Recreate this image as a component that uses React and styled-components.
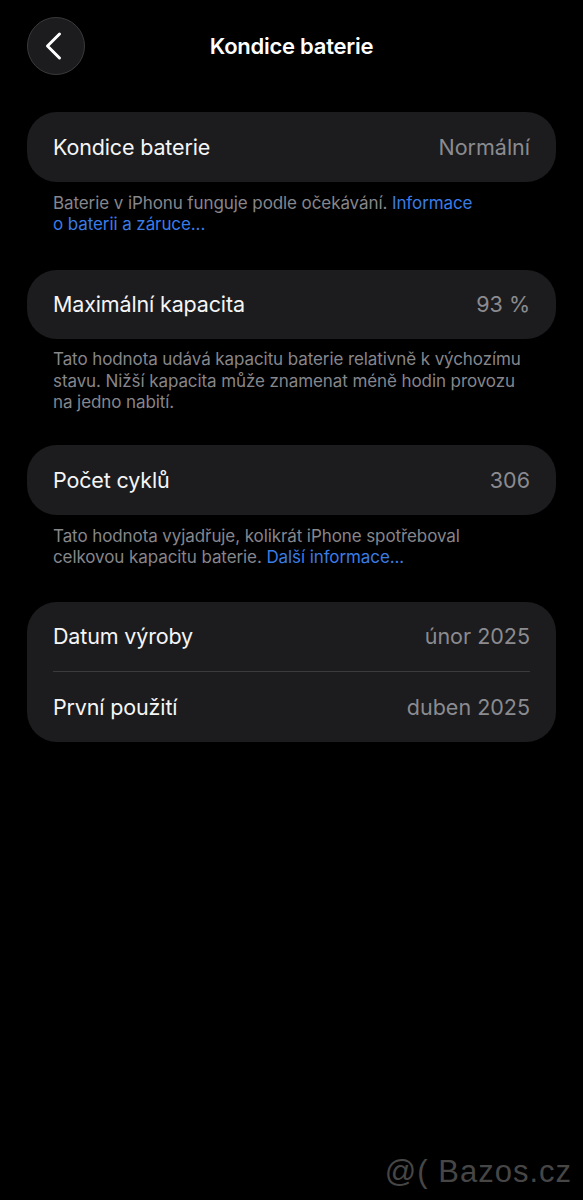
import React from "react";
import styled, { createGlobalStyle } from "styled-components";

const Global = createGlobalStyle`
  html, body { margin: 0; padding: 0; background: #000; }
  body { font-family: "Inter", "Liberation Sans", sans-serif; }
`;
const Page = styled.div`
  position: relative; width: 583px; height: 1200px; background: #000; overflow: hidden;
  padding: 17px 27px 0; box-sizing: border-box;
`;
const Header = styled.header`
  display: grid; grid-template-columns: 58px 1fr 58px; align-items: center; height: 58px; margin-bottom: 37px;
`;
const Back = styled.button`
  width: 58px; height: 58px; border-radius: 50%; background: #1c1c1e; border: 1px solid #3a3a3c; padding: 0 5px 0 0;
  display: flex; align-items: center; justify-content: center; box-sizing: border-box;
`;
const Title = styled.h1`
  margin: 0; text-align: center; color: #fff; font-size: 22px; font-weight: 600; letter-spacing: -0.25px;
`;
const Card = styled.section`
  background: #1c1c1e; border-radius: 30px; padding: 0 26px;
`;
const Row = styled.div`
  display: flex; justify-content: space-between; align-items: center; height: 69.5px;
  font-size: 21.5px; font-weight: 400; letter-spacing: -0.15px;
  & + & { border-top: 1px solid #3a3a3c; }
`;
const Label = styled.span` color: #f5f5f7; `;
const Value = styled.span` color: #8b8b90; letter-spacing: 0; `;
const Note = styled.p`
  margin: ${p => p.$top}px 0 0; padding: 0 26px; color: #86868b; font-size: 17px; line-height: 21.7px; letter-spacing: -0.09px;
  height: ${p => p.$h}px; white-space: nowrap;
`;
const A = styled.span` color: #3a7ce6; `;
const Gap = styled.div` height: ${p => p.$h}px; `;
const Watermark = styled.div`
  position: absolute; right: 11px; bottom: 10px; color: #464646; font-family: "Liberation Sans", sans-serif;
  font-size: 31px; letter-spacing: 1px; white-space: nowrap;
`;

export default function App() {
  return (
    <Page>
      <Global />
      <Header>
        <Back aria-label="Zpět">
          <svg width="20" height="30" viewBox="0 0 20 30" fill="none">
            <path d="M15.5 3 L3.5 15 L15.5 27" stroke="#fff" strokeWidth="3" strokeLinecap="round" strokeLinejoin="round" />
          </svg>
        </Back>
        <Title>Kondice baterie</Title>
      </Header>
      <Card><Row><Label>Kondice baterie</Label><Value>Normální</Value></Row></Card>
      <Note $top={11} $h={44}>Baterie v iPhonu funguje podle očekávání. <A>Informace<br />o baterii a záruce...</A></Note>
      <Gap $h={33} />
      <Card><Row><Label>Maximální kapacita</Label><Value>93 %</Value></Row></Card>
      <Note $top={10} $h={66}>Tato hodnota udává kapacitu baterie relativně k výchozímu<br />stavu. Nižší kapacita může znamenat méně hodin provozu<br />na jedno nabití.</Note>
      <Gap $h={30} />
      <Card><Row><Label>Počet cyklů</Label><Value>306</Value></Row></Card>
      <Note $top={11} $h={44}>Tato hodnota vyjadřuje, kolikrát iPhone spotřeboval<br />celkovou kapacitu baterie. <A>Další informace...</A></Note>
      <Gap $h={32} />
      <Card>
        <Row><Label>Datum výroby</Label><Value>únor 2025</Value></Row>
        <Row><Label>První použití</Label><Value>duben 2025</Value></Row>
      </Card>
      <Watermark>@( Bazos.cz</Watermark>
    </Page>
  );
}
